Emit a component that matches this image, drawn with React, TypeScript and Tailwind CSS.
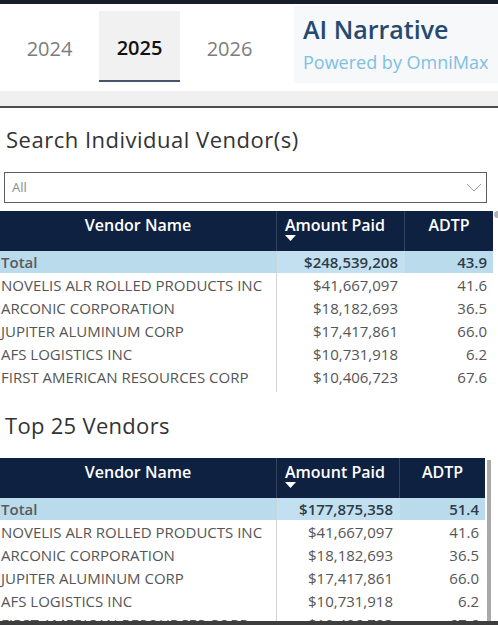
import React from 'react';

type Row = { name: string; amount: string; adtp: string };

const rows: Row[] = [
  { name: 'NOVELIS ALR ROLLED PRODUCTS INC', amount: '$41,667,097', adtp: '41.6' },
  { name: 'ARCONIC CORPORATION', amount: '$18,182,693', adtp: '36.5' },
  { name: 'JUPITER ALUMINUM CORP', amount: '$17,417,861', adtp: '66.0' },
  { name: 'AFS LOGISTICS INC', amount: '$10,731,918', adtp: '6.2' },
  { name: 'FIRST AMERICAN RESOURCES CORP', amount: '$10,406,723', adtp: '67.6' },
];

interface TableProps {
  total: Row;
  amountW: string;
  adtpW: string;
}

const VendorTable: React.FC<TableProps> = ({ total, amountW, adtpW }) => {
  return (
    <div className="flex flex-col shrink-0">
      {/* header */}
      <div className="flex h-[40px] shrink-0 bg-[#0f2140] text-white font-semibold text-[16px] leading-[22px]">
        <div className="w-[277px] shrink-0 border-r border-[#34435e] text-center pt-[3px]">Vendor Name</div>
        <div className={`${amountW} shrink-0 border-r border-[#34435e] pt-[3px] pl-[8px] flex flex-col`}>
          <span>Amount Paid</span>
          <svg width="11" height="6" viewBox="0 0 11 6" className="mt-[-1px]">
            <polygon points="0,0 11,0 5.5,6" fill="#ffffff" />
          </svg>
        </div>
        <div className={`${adtpW} shrink-0 text-center pt-[3px]`}>ADTP</div>
      </div>
      {/* total */}
      <div className="flex h-[22px] shrink-0 bg-[#b9dbec] text-[15px] leading-[22px] font-semibold">
        <div className="w-[277px] shrink-0 border-r border-[#c9d6de] pl-[1px] text-[#5a5a5a]">{total.name}</div>
        <div className={`${amountW} shrink-0 text-right pr-[7px] text-[#2f3b48] bg-[#c2e0ef]`}>{total.amount}</div>
        <div className={`${adtpW} shrink-0 text-right pr-[6px] text-[#2f3b48]`}>{total.adtp}</div>
      </div>
      {rows.map((r) => (
        <div key={r.name} className="flex h-[23px] shrink-0 text-[15px] leading-[25px] text-[#555555]">
          <div className="w-[277px] shrink-0 border-r border-[#d4d4d4] pl-[1px] whitespace-nowrap overflow-hidden">{r.name}</div>
          <div className={`${amountW} shrink-0 text-right pr-[7px]`}>{r.amount}</div>
          <div className={`${adtpW} shrink-0 text-right pr-[6px]`}>{r.adtp}</div>
        </div>
      ))}
      <div className="flex h-[4px] shrink-0">
        <div className="w-[277px] shrink-0 border-r border-[#d4d4d4]" />
      </div>
    </div>
  );
};

export default function App() {
  return (
    <div className="relative w-[498px] h-[625px] overflow-hidden bg-white flex flex-col font-['Open_Sans',sans-serif]">
      <div className="h-[4px] shrink-0 bg-[#161e2c]" />

      {/* year tabs + AI narrative */}
      <div className="h-[87px] shrink-0 flex">
        <div className="flex pl-[9px] gap-[9px] mt-[7px] h-[71px]">
          {['2024', '2025', '2026'].map((y) => {
            const active = y === '2025';
            return (
              <div
                key={y}
                className={
                  active
                    ? 'w-[81px] h-[71px] flex items-center justify-center pt-[4px] bg-[#f1f1f1] border-b-2 border-[#46566c] text-[20px] font-semibold text-[#111111]'
                    : 'w-[81px] h-[71px] flex items-center justify-center pt-[4px] text-[20px] text-[#7c7c7c]'
                }
              >
                {y}
              </div>
            );
          })}
        </div>
        <div className="ml-auto mt-[2px] w-[204px] h-[77px] bg-[#f6f8fa] pl-[9px] pt-[8px]">
          <div className="text-[25px] leading-[30px] font-semibold text-[#244a6f]">AI Narrative</div>
          <div className="mt-[5px] text-[18px] leading-[26px] text-[#7ec0e2]">Powered by OmniMax</div>
        </div>
      </div>
      <div className="h-[15px] shrink-0 bg-[#f0f0f0]" />
      <div className="h-[2px] shrink-0 bg-[#4e4e4e]" />

      {/* section 1 */}
      <div className="shrink-0 mt-[17px] pl-[6px] text-[22px] leading-[28px] tracking-[0.5px] text-[#333333]">
        Search Individual Vendor(s)
      </div>
      <div className="shrink-0 mt-[19px] ml-[4px] w-[483px] h-[31px] border border-[#5e5e5e] flex items-center justify-between pl-[7px] pr-[4px]">
        <span className="text-[13px] text-[#8a8a8a]">All</span>
        <svg width="16" height="9" viewBox="0 0 16 9">
          <polyline points="1,1 8,8 15,1" fill="none" stroke="#9a9a9a" strokeWidth="1" />
        </svg>
      </div>
      <div className="shrink-0 mt-[8px] flex">
        <VendorTable
          total={{ name: 'Total', amount: '$248,539,208', adtp: '43.9' }}
          amountW="w-[128px]"
          adtpW="w-[88px]"
        />
        <div className="ml-[1px] w-[5px] h-[7px] rounded-l-full bg-[#b5b5b5]" />
      </div>

      {/* section 2 */}
      <div className="shrink-0 mt-[19px] pl-[5px] text-[22px] leading-[28px] tracking-[0.3px] text-[#333333]">Top 25 Vendors</div>
      <div className="shrink-0 mt-[19px] flex">
        <VendorTable
          total={{ name: 'Total', amount: '$177,875,358', adtp: '51.4' }}
          amountW="w-[123px]"
          adtpW="w-[85px]"
        />
        <div className="ml-[2px] mt-[2px] w-[4px] h-[200px] bg-[#a9a9a9]" />
      </div>
      {/* window edge overlapping the cut-off last row */}
      <div className="absolute bottom-0 left-0 w-full h-[4px] bg-[#3e3e3e]" />
    </div>
  );
}
